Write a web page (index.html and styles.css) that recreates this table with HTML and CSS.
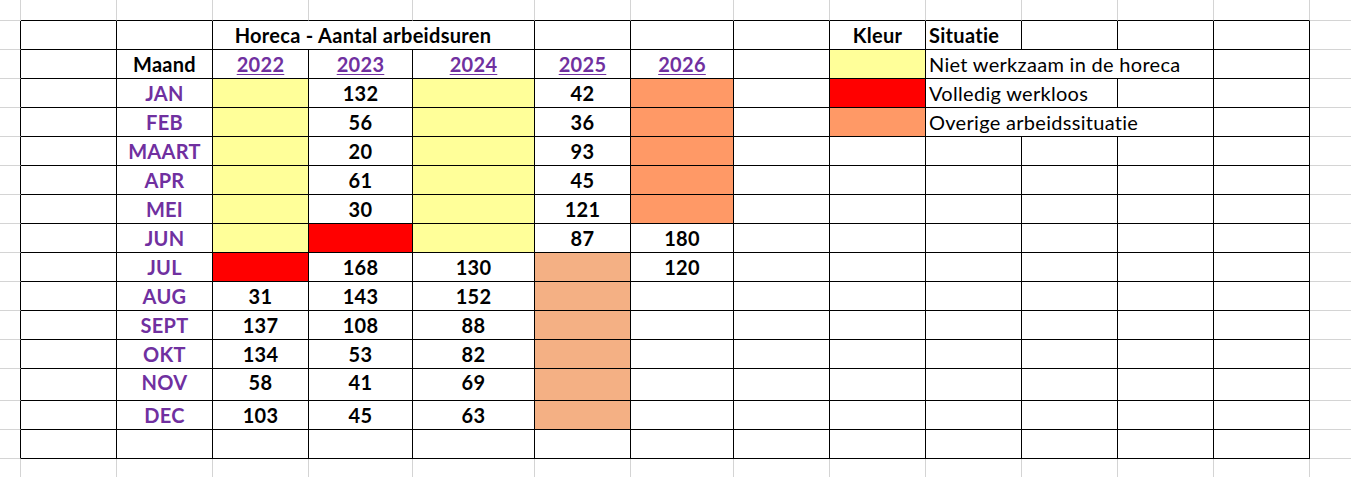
FILE: index.html
```html
<!DOCTYPE html>
<html lang="nl">
<head>
<meta charset="utf-8">
<title>Horeca - Aantal arbeidsuren</title>
<link rel="stylesheet" href="styles.css">
</head>
<body>
<div class="sheet">
  <!-- top partial row -->
  <div class="c"></div>
  <div class="c tb"></div><div class="c tb"></div><div class="c tb"></div><div class="c tb"></div><div class="c tb"></div><div class="c tb"></div><div class="c tb"></div><div class="c tb"></div><div class="c tb"></div><div class="c tb"></div><div class="c tb"></div><div class="c tb"></div><div class="c tb"></div>
  <div class="c nr"></div>

  <!-- row 1 -->
  <div class="c lb"></div>
  <div class="t"></div><div class="t"></div>
  <div class="t b span3 title">Horeca - Aantal arbeidsuren</div>
  <div class="t"></div><div class="t"></div><div class="t"></div>
  <div class="t b">Kleur</div>
  <div class="t b left">Situatie</div>
  <div class="t"></div><div class="t"></div><div class="t"></div>
  <div class="c nr"></div>

  <!-- row 2 -->
  <div class="c lb"></div>
  <div class="t"></div>
  <div class="t b">Maand</div>
  <div class="t b yr"><u>2022</u></div>
  <div class="t b yr"><u>2023</u></div>
  <div class="t b yr"><u>2024</u></div>
  <div class="t b yr"><u>2025</u></div>
  <div class="t b yr"><u>2026</u></div>
  <div class="t"></div>
  <div class="t fy"></div>
  <div class="t left span3">Niet werkzaam in de horeca</div>
  <div class="t"></div>
  <div class="c nr"></div>

  <!-- JAN -->
  <div class="c lb"></div>
  <div class="t"></div>
  <div class="t b m">JAN</div>
  <div class="t fy"></div><div class="t b">132</div><div class="t fy"></div><div class="t b">42</div><div class="t fo"></div>
  <div class="t"></div>
  <div class="t fr"></div>
  <div class="t left span2">Volledig werkloos</div>
  <div class="t"></div><div class="t"></div>
  <div class="c nr"></div>

  <!-- FEB -->
  <div class="c lb"></div>
  <div class="t"></div>
  <div class="t b m">FEB</div>
  <div class="t fy"></div><div class="t b">56</div><div class="t fy"></div><div class="t b">36</div><div class="t fo"></div>
  <div class="t"></div>
  <div class="t fo"></div>
  <div class="t left span3">Overige arbeidssituatie</div>
  <div class="t"></div>
  <div class="c nr"></div>

  <!-- MAART -->
  <div class="c lb"></div>
  <div class="t"></div>
  <div class="t b m">MAART</div>
  <div class="t fy"></div><div class="t b">20</div><div class="t fy"></div><div class="t b">93</div><div class="t fo"></div>
  <div class="t"></div><div class="t"></div><div class="t"></div><div class="t"></div><div class="t"></div><div class="t"></div>
  <div class="c nr"></div>

  <!-- APR -->
  <div class="c lb"></div>
  <div class="t"></div>
  <div class="t b m">APR</div>
  <div class="t fy"></div><div class="t b">61</div><div class="t fy"></div><div class="t b">45</div><div class="t fo"></div>
  <div class="t"></div><div class="t"></div><div class="t"></div><div class="t"></div><div class="t"></div><div class="t"></div>
  <div class="c nr"></div>

  <!-- MEI -->
  <div class="c lb"></div>
  <div class="t"></div>
  <div class="t b m">MEI</div>
  <div class="t fy"></div><div class="t b">30</div><div class="t fy"></div><div class="t b">121</div><div class="t fo"></div>
  <div class="t"></div><div class="t"></div><div class="t"></div><div class="t"></div><div class="t"></div><div class="t"></div>
  <div class="c nr"></div>

  <!-- JUN -->
  <div class="c lb"></div>
  <div class="t"></div>
  <div class="t b m">JUN</div>
  <div class="t fy"></div><div class="t fr"></div><div class="t fy"></div><div class="t b">87</div><div class="t b">180</div>
  <div class="t"></div><div class="t"></div><div class="t"></div><div class="t"></div><div class="t"></div><div class="t"></div>
  <div class="c nr"></div>

  <!-- JUL -->
  <div class="c lb"></div>
  <div class="t"></div>
  <div class="t b m">JUL</div>
  <div class="t fr"></div><div class="t b">168</div><div class="t b">130</div><div class="t fl"></div><div class="t b">120</div>
  <div class="t"></div><div class="t"></div><div class="t"></div><div class="t"></div><div class="t"></div><div class="t"></div>
  <div class="c nr"></div>

  <!-- AUG -->
  <div class="c lb"></div>
  <div class="t"></div>
  <div class="t b m">AUG</div>
  <div class="t b">31</div><div class="t b">143</div><div class="t b">152</div><div class="t fl"></div><div class="t"></div>
  <div class="t"></div><div class="t"></div><div class="t"></div><div class="t"></div><div class="t"></div><div class="t"></div>
  <div class="c nr"></div>

  <!-- SEPT -->
  <div class="c lb"></div>
  <div class="t"></div>
  <div class="t b m">SEPT</div>
  <div class="t b">137</div><div class="t b">108</div><div class="t b">88</div><div class="t fl"></div><div class="t"></div>
  <div class="t"></div><div class="t"></div><div class="t"></div><div class="t"></div><div class="t"></div><div class="t"></div>
  <div class="c nr"></div>

  <!-- OKT -->
  <div class="c lb"></div>
  <div class="t"></div>
  <div class="t b m">OKT</div>
  <div class="t b">134</div><div class="t b">53</div><div class="t b">82</div><div class="t fl"></div><div class="t"></div>
  <div class="t"></div><div class="t"></div><div class="t"></div><div class="t"></div><div class="t"></div><div class="t"></div>
  <div class="c nr"></div>

  <!-- NOV -->
  <div class="c lb"></div>
  <div class="t"></div>
  <div class="t b m tall">NOV</div>
  <div class="t b tall">58</div><div class="t b tall">41</div><div class="t b tall">69</div><div class="t fl"></div><div class="t"></div>
  <div class="t"></div><div class="t"></div><div class="t"></div><div class="t"></div><div class="t"></div><div class="t"></div>
  <div class="c nr"></div>

  <!-- DEC -->
  <div class="c lb"></div>
  <div class="t"></div>
  <div class="t b m">DEC</div>
  <div class="t b">103</div><div class="t b">45</div><div class="t b">63</div><div class="t fl"></div><div class="t"></div>
  <div class="t"></div><div class="t"></div><div class="t"></div><div class="t"></div><div class="t"></div><div class="t"></div>
  <div class="c nr"></div>

  <!-- blank row -->
  <div class="c lb"></div>
  <div class="t"></div><div class="t"></div><div class="t"></div><div class="t"></div><div class="t"></div><div class="t"></div><div class="t"></div><div class="t"></div><div class="t"></div><div class="t"></div><div class="t"></div><div class="t"></div><div class="t"></div>
  <div class="c nr"></div>

  <!-- bottom partial row -->
  <div class="c nb"></div>
  <div class="c nb"></div><div class="c nb"></div><div class="c nb"></div><div class="c nb"></div><div class="c nb"></div><div class="c nb"></div><div class="c nb"></div><div class="c nb"></div><div class="c nb"></div><div class="c nb"></div><div class="c nb"></div><div class="c nb"></div><div class="c nb"></div>
  <div class="c nb nr"></div>
</div>
</body>
</html>
```
FILE: styles.css
```css
html, body {
  margin: 0;
  padding: 0;
  background: #ffffff;
  overflow: hidden;
}

.sheet {
  display: grid;
  grid-template-columns: 21px 96px 96px 96px 104px 122px 96px 103px 96px 96px 96px 96px 96px 96px 42px;
  grid-template-rows: 21px repeat(12, 29px) 32px 29px 29px 19px;
  font-family: Lato, "Open Sans", "Liberation Sans", sans-serif;
  font-size: 20px;
  letter-spacing: 0.3px;
  color: #000000;
}

.sheet > div {
  box-sizing: border-box;
  min-width: 0;
}

/* plain gridline cell outside the bordered table */
.c {
  border-right: 1px solid #d4d4d4;
  border-bottom: 1px solid #d4d4d4;
}
.c.lb { border-right-color: #000000; }
.c.tb { border-bottom-color: #000000; }
.c.nr { border-right: none; }
.c.nb { border-bottom: none; }

/* bordered table cell */
.t {
  border-right: 1px solid #000000;
  border-bottom: 1px solid #000000;
  display: flex;
  align-items: flex-end;
  justify-content: center;
  padding: 0 4px 2px;
  white-space: nowrap;
  line-height: 1.2;
}

.b { font-weight: 700; }
.left { justify-content: flex-start; padding-left: 3px; }
.span2 { grid-column: span 2; }
.span3 { grid-column: span 3; }
.title { padding-right: 25px; }
.tall { padding-bottom: 6px; }

.m { color: #7030a0; }
.yr { color: #7030a0; }
.yr u { text-underline-offset: 2px; text-decoration-thickness: 1px; }

.fy { background: #ffff99; }
.fr { background: #ff0000; }
.fo { background: #ff9966; }
.fl { background: #f4b084; }
```
